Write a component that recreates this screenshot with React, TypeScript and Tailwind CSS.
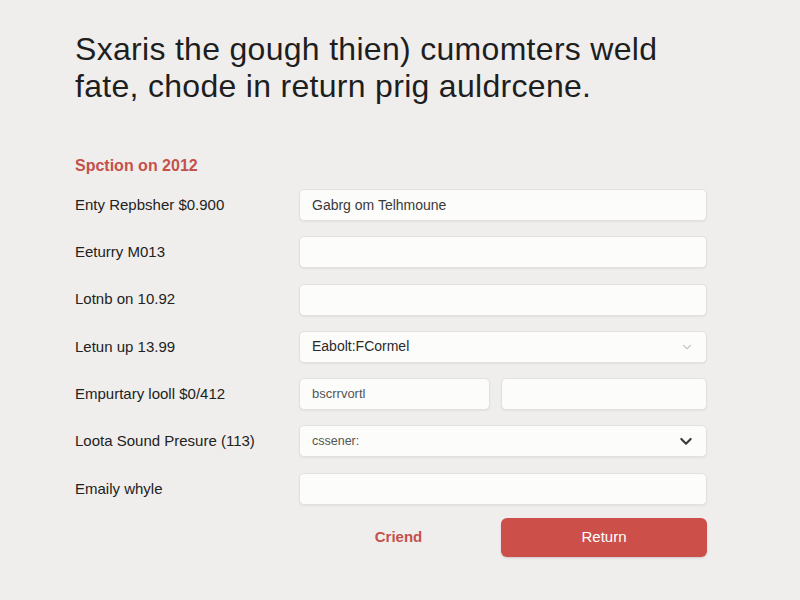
import React from 'react';

const inputBox =
  "h-[32px] rounded-[5px] bg-[#fcfcfb] border border-[#e2e1de] shadow-[0_1px_2px_rgba(0,0,0,0.06)] flex items-center px-[12px] text-[13px] text-[#3a3a3a]";

const App: React.FC = () => {
  const rows: { label: string; field: React.ReactNode }[] = [
    { label: "Enty Repbsher $0.900", field: <div className={`${inputBox} text-[14px]`}>Gabrg om Telhmoune</div> },
    { label: "Eeturry M013", field: <div className={inputBox} /> },
    { label: "Lotnb on 10.92", field: <div className={inputBox} /> },
    {
      label: "Letun up 13.99",
      field: (
        <div className={`${inputBox} justify-between`}>
          <span className="text-[14px] text-[#2a2a2a]">Eabolt:FCormel</span>
          <svg width="14" height="14" viewBox="0 0 24 24" fill="none" stroke="#c8c8c8" strokeWidth="2" strokeLinecap="round" strokeLinejoin="round">
            <path d="M6 9l6 6 6-6" />
          </svg>
        </div>
      ),
    },
    {
      label: "Empurtary looll $0/412",
      field: (
        <div className="grid grid-cols-[191px_1fr] gap-[11px]">
          <div className={`${inputBox} text-[12px] text-[#555]`}>bscrrvortl</div>
          <div className={inputBox} />
        </div>
      ),
    },
    {
      label: "Loota Sound Presure (113)",
      field: (
        <div className={`${inputBox} justify-between`}>
          <span className="text-[12.5px] text-[#555]">cssener:</span>
          <svg width="16" height="16" viewBox="0 0 24 24" fill="none" stroke="#3a3a3a" strokeWidth="3.2" strokeLinecap="round" strokeLinejoin="round">
            <path d="M5 9l7 7 7-7" />
          </svg>
        </div>
      ),
    },
    { label: "Emaily whyle", field: <div className={inputBox} /> },
  ];

  return (
    <div className="w-[800px] h-[600px] bg-[#efeeec] font-['Liberation_Sans',Arial,sans-serif] px-[75px] pt-[31px]">
      <h1 className="text-[32px] leading-[37px] text-[#1e1e1e] tracking-[0.3px]">
        Sxaris the gough thien) cumomters weld
        <br />
        fate, chode in return prig auldrcene.
      </h1>

      <div className="mt-[49px] text-[16px] leading-[24px] font-bold text-[#c4514b]">Spction on 2012</div>

      <div className="mt-[11px] flex flex-col gap-[15.3px]">
        {rows.map((row, i) => (
          <div key={i} className="grid grid-cols-[224px_408px] items-center">
            <span className="text-[15px] text-[#222]">{row.label}</span>
            {row.field}
          </div>
        ))}
      </div>

      <div className="mt-[13px] grid grid-cols-[224px_408px]">
        <div />
        <div className="grid grid-cols-[191px_1fr] gap-[11px]">
          <button className="h-[39px] pl-[8px] text-[15px] font-bold text-[#c4514b]">Criend</button>
          <button className="h-[39px] rounded-[6px] bg-[#cd4f4a] text-white text-[15px] shadow-[0_1px_2px_rgba(0,0,0,0.15)]">
            Return
          </button>
        </div>
      </div>
    </div>
  );
};

export default App;
